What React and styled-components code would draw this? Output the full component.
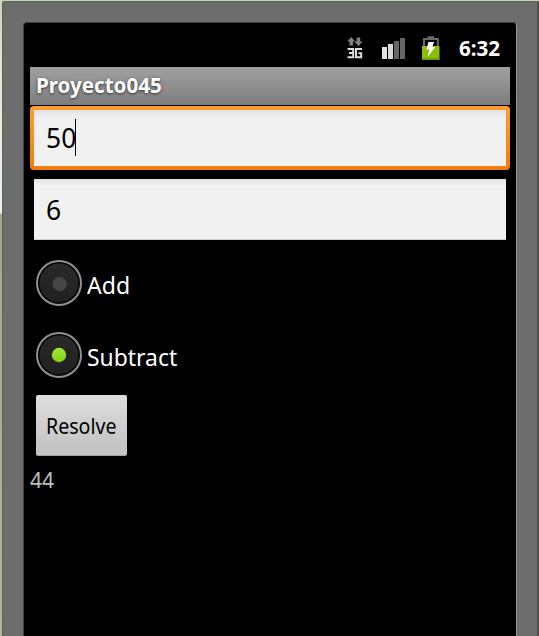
import React from "react";
import styled, { createGlobalStyle } from "styled-components";

const GlobalStyle = createGlobalStyle`
  * { box-sizing: border-box; }
  body { margin: 0; background: #6d6d6d; overflow: hidden; font-family: "Noto Sans", "Open Sans", sans-serif; }
`;

const Desktop = styled.div`
  width: 539px;
  height: 636px;
  padding: 1px 0 0 2px;
  overflow: hidden;
  background: linear-gradient(#c7d8b8 0, #dce9d2 60px, #eef5e9 213px, #9cae88 214px, #a9ba98 636px);
`;

const Bezel = styled.div`
  height: 635px;
  padding: 20px 20px 0 20px;
  background: #6d6d6d;
  border-top: 1px solid #596055;
  border-left: 1px solid #5c6257;
  border-right: 2px solid #4d4d4d;
  border-top-left-radius: 2px;
`;

const Screen = styled.main`
  height: 614px;
  padding: 0 6px 0 6px;
  background: #000;
  border: 1px solid #424242;
  border-right-color: #929292;
  border-bottom: 0;
  border-radius: 4px 4px 0 0;
`;

const StatusBar = styled.header`
  height: 44px;
  display: flex;
  justify-content: flex-end;
  align-items: flex-start;
  padding: 12px 9px 0 0;
`;

const Network = styled.svg`
  width: 18px;
  height: 26px;
  margin-right: 16px;
`;

const Signal = styled.svg`
  width: 26px;
  height: 26px;
  margin-right: 14px;
`;

const Battery = styled.svg`
  width: 20px;
  height: 26px;
  margin-right: 18px;
`;

const Label = styled.span`
  display: inline-block;
  white-space: nowrap;
  transform-origin: left center;
  transform: scaleX(${(p) => p.$stretch || 1});
`;

const Clock = styled.time`
  width: 42px;
  color: #fff;
  font-size: 21px;
  font-weight: 700;
  line-height: 26px;
`;

const TitleBar = styled.div`
  height: 38px;
  padding-left: 6px;
  background: linear-gradient(#a0a0a0, #7e7e7e);
  color: #fff;
  font-size: 21px;
  font-weight: 700;
  line-height: 36px;
  text-shadow: 0 1px 3px #333;
`;

const Field = styled.div`
  display: flex;
  align-items: center;
  color: #000;
  font-size: 27px;
  background: linear-gradient(#e2e2e2, #f1f1f1 7px, #f1f1f1);
`;

const FocusRing = styled.div`
  height: 64px;
  margin-top: 1px;
  padding: 4px;
  border-radius: 4px;
  background: linear-gradient(#ff9f30, #f07c0d);
`;

const FocusedField = styled(Field)`
  height: 56px;
  padding: 0 0 2px 12px;
`;

const PlainField = styled(Field)`
  height: 61px;
  margin: 9px 4px 0;
  padding-left: 12px;
  border-bottom: 1px solid #d0d0d0;
`;

const Caret = styled.i`
  width: 1px;
  height: 37px;
  margin-left: -2px;
  background: #000;
`;

const Options = styled.div`
  padding: 7px 0 0 6px;
`;

const Option = styled.div`
  height: 72px;
  display: flex;
  align-items: center;
  color: #fff;
  font-size: 24px;
`;

const OptionText = styled.div`
  margin: 2px 0 0 5px;
`;

const Dial = styled.svg`
  width: 46px;
  height: 46px;
`;

const Button = styled.button`
  display: flex;
  align-items: center;
  width: 91px;
  height: 61px;
  margin: 4px 0 0 6px;
  padding: 0 0 1px 10px;
  border: 0;
  border-bottom: 1px solid #a4a4a4;
  border-radius: 2px;
  background: linear-gradient(#dedede, #c1c1c1);
  color: #000;
  font: 22px "Noto Sans", sans-serif;
`;

const Result = styled.div`
  margin-top: 8px;
  color: #bebebe;
  font-size: 21px;
  line-height: 32px;
`;

function Radio({ checked, label, stretch }) {
  return (
    <Option>
      <Dial viewBox="0 0 46 46">
        <defs>
          <linearGradient id="lit" x2="0" y2="1">
            <stop stopColor="#a4e83c" />
            <stop offset="1" stopColor="#7dd214" />
          </linearGradient>
          <linearGradient id="disc" x2="0" y2="1">
            <stop stopColor="#2a2a2a" />
            <stop offset="1" stopColor="#202020" />
          </linearGradient>
        </defs>
        <circle cx="23" cy="23" r="22" fill="#000" stroke="#929292" strokeWidth="2" />
        <circle cx="23" cy="23" r="19.5" fill="url(#disc)" />
        <circle cx={checked ? 23 : 23.7} cy={checked ? 23 : 24} r="7.2" fill={checked ? "url(#lit)" : "#454545"} />
      </Dial>
      <OptionText><Label $stretch={stretch}>{label}</Label></OptionText>
    </Option>
  );
}

export default function App() {
  return (
    <>
      <GlobalStyle />
      <Desktop>
        <Bezel>
          <Screen>
            <StatusBar>
              <Network viewBox="0 0 18 26">
                <path d="M4.2 2L8.2 6.5H6V10.5H2.5V6.5H0.3ZM9.7 2.5H13.2V6.5H15.5L11.5 11.2L7.5 6.5H9.7Z" fill="#828282" />
                <path d="M0.5 14H6.2V22.3H0.5M2 18H6.2M15 14H9V22.3H14.2V18.3H11.5" fill="none" stroke="#dedede" strokeWidth="2" />
              </Network>
              <Signal viewBox="0 0 26 26">
                <path d="M1 12H6V24H1Z" fill="#e2e2e2" />
                <path d="M7 9H12V24H7Z" fill="#d8d8d8" />
                <path d="M13 6H18V24H13ZM19 3H24V24H19Z" fill="#666" />
              </Signal>
              <Battery viewBox="0 0 20 26">
                <path d="M3 11V4H16.8V11" fill="none" stroke="#696969" strokeWidth="2" />
                <path d="M6.5 1.2H13V4H6.5Z" fill="#696969" />
                <path d="M1 11H18.5V25H1Z" fill="#8bbd0a" />
                <path d="M1 23H18.5V25H1Z" fill="#6c9e05" />
                <path d="M7.5 7H13L11.3 12H14.3L6.5 22L8.5 14.5H5.3Z" fill="#fff" />
              </Battery>
              <Clock><Label $stretch={0.98}>6:32</Label></Clock>
            </StatusBar>
            <TitleBar><Label $stretch={0.98}>Proyecto045</Label></TitleBar>
            <FocusRing>
              <FocusedField><Label $stretch={0.98}>50</Label><Caret /></FocusedField>
            </FocusRing>
            <PlainField><Label $stretch={0.98}>6</Label></PlainField>
            <Options>
              <Radio label="Add" stretch={0.96} />
              <Radio label="Subtract" stretch={0.955} checked />
            </Options>
            <Button><Label $stretch={0.89}>Resolve</Label></Button>
            <Result><Label>44</Label></Result>
          </Screen>
        </Bezel>
      </Desktop>
    </>
  );
}
